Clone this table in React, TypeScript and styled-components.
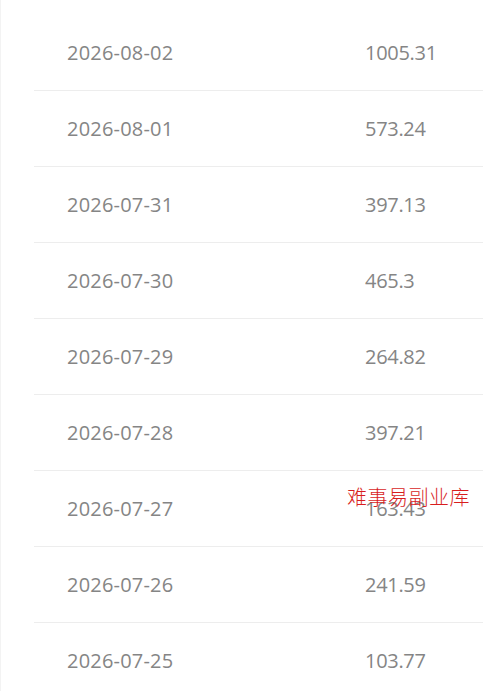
import React from 'react'
import styled, { createGlobalStyle } from 'styled-components'

const GlobalStyle = createGlobalStyle`
  html, body {
    margin: 0;
    padding: 0;
    background: #ffffff;
  }
  body {
    font-family: 'Open Sans', 'Noto Sans', 'Noto Sans CJK SC', sans-serif;
    overflow: hidden;
  }
`

const Page = styled.div`
  position: relative;
  width: 483px;
  height: 691px;
  overflow: hidden;
  background: #ffffff;
`

const List = styled.div`
  display: flex;
  flex-direction: column;
  padding-top: 15px;
  border-left: 1px solid #f3f3f3;
`

const Row = styled.div`
  display: grid;
  grid-template-columns: 298px 1fr;
  align-items: center;
  height: 75px;
  margin-left: 33px;
  padding-left: 33px;
  border-bottom: 1px solid #ededed;
`

const Cell = styled.span<{ $wide?: boolean }>`
  font-size: 20px;
  line-height: 1;
  color: #858585;
  letter-spacing: ${({ $wide }) => ($wide ? '0.2px' : '-0.3px')};
`

const Watermark = styled.div`
  position: absolute;
  left: 347px;
  top: 482px;
  font-family: 'Noto Sans CJK SC', sans-serif;
  font-weight: 300;
  font-size: 20px;
  letter-spacing: 0.5px;
  color: #d81e1e;
  white-space: nowrap;
`

const records = [
  ['2026-08-02', '1005.31'],
  ['2026-08-01', '573.24'],
  ['2026-07-31', '397.13'],
  ['2026-07-30', '465.3'],
  ['2026-07-29', '264.82'],
  ['2026-07-28', '397.21'],
  ['2026-07-27', '163.43'],
  ['2026-07-26', '241.59'],
  ['2026-07-25', '103.77'],
]

const App = () => (
  <Page>
    <GlobalStyle />
    <List>
      {records.map(([date, amount]) => (
        <Row key={date}>
          <Cell $wide>{date}</Cell>
          <Cell>{amount}</Cell>
        </Row>
      ))}
    </List>
    <Watermark>难事易副业库</Watermark>
  </Page>
)

export default App
